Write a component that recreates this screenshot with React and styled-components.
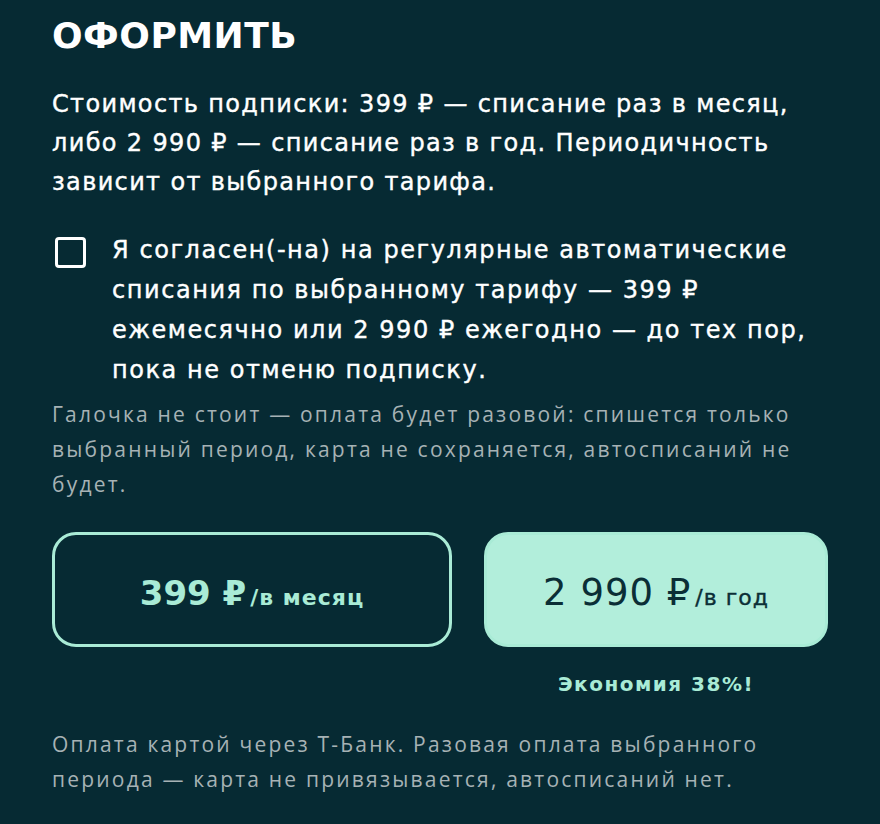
import React, { useState } from 'react';
import styled, { createGlobalStyle } from 'styled-components';

const GlobalStyle = createGlobalStyle`
  html, body {
    margin: 0;
    padding: 0;
    background: #062a33;
  }
  * {
    box-sizing: border-box;
  }
`;

const Panel = styled.section`
  width: 880px;
  min-height: 824px;
  padding: 14px 52px 0;
  background: #062a33;
  color: #ffffff;
  font-family: 'DejaVu Sans', 'Noto Sans', sans-serif;
`;

const Title = styled.h1`
  margin: 0;
  font-size: 36px;
  line-height: 44px;
  font-weight: 700;
  letter-spacing: 0.5px;
`;

const Lead = styled.p`
  margin: 27px 0 0;
  font-size: 24px;
  line-height: 39px;
  letter-spacing: 1.35px;
  -webkit-text-stroke: 0.4px currentColor;
`;

const Agree = styled.label`
  display: flex;
  gap: 26px;
  align-items: flex-start;
  margin-top: 28px;
  cursor: pointer;
`;

const Box = styled.span`
  flex: none;
  width: 31px;
  height: 31px;
  margin: 7px 0 0 3px;
  border: 3px solid #ffffff;
  border-radius: 4px;
  background: ${(p) => (p.$checked ? '#b2eedb' : 'transparent')};
`;

const AgreeText = styled.span`
  font-size: 24px;
  line-height: 40px;
  letter-spacing: 1.55px;
  -webkit-text-stroke: 0.4px currentColor;
`;

const Note = styled.p`
  margin: ${(p) => p.$top || '0'} 0 0;
  font-family: 'Open Sans', 'Roboto', sans-serif;
  font-size: 21px;
  line-height: 35px;
  letter-spacing: 2.2px;
  color: #a6b2b5;
`;

const Plans = styled.div`
  display: flex;
  gap: 32px;
  margin-top: 30px;
`;

const PlanColumn = styled.div`
  display: flex;
  flex-direction: column;
  align-items: center;
  flex: ${(p) => p.$grow};
`;

const Plan = styled.button`
  width: 100%;
  height: 115px;
  display: flex;
  align-items: center;
  justify-content: center;
  padding: 6px 0 0;
  border-radius: 24px;
  border: 3px solid #a9ebd6;
  background: ${(p) => (p.$filled ? '#b2eedb' : 'transparent')};
  color: ${(p) => (p.$filled ? '#0b2e36' : '#a9ebd6')};
  font-family: 'DejaVu Sans', sans-serif;
  cursor: pointer;
`;

const PlanLabel = styled.span`
  display: flex;
  align-items: baseline;
  gap: 4px;
`;

const Price = styled.span`
  font-size: ${(p) => (p.$bold ? '34px' : '37px')};
  font-weight: ${(p) => (p.$bold ? 700 : 400)};
  letter-spacing: ${(p) => (p.$bold ? '0' : '1px')};
`;

const Period = styled.span`
  font-size: 22px;
  letter-spacing: 1px;
  font-weight: ${(p) => (p.$bold ? 700 : 400)};
  -webkit-text-stroke: ${(p) => (p.$bold ? '0' : '0.4px currentColor')};
`;

const Saving = styled.div`
  margin-top: 25px;
  font-size: 20px;
  line-height: 24px;
  font-weight: 700;
  letter-spacing: 1.5px;
  color: #a9ebd6;
`;

export default function App() {
  const [checked, setChecked] = useState(false);

  return (
    <>
      <GlobalStyle />
      <Panel>
        <Title>ОФОРМИТЬ</Title>
        <Lead>
          Стоимость подписки: 399 ₽ — списание раз в месяц, либо 2 990 ₽ — списание раз в год.
          Периодичность зависит от выбранного тарифа.
        </Lead>
        <Agree onClick={() => setChecked(!checked)}>
          <Box $checked={checked} />
          <AgreeText>
            Я согласен(-на) на регулярные автоматические списания по выбранному тарифу — 399 ₽
            ежемесячно или 2 990 ₽ ежегодно — до тех пор, пока не отменю подписку.
          </AgreeText>
        </Agree>
        <Note $top="7px">
          Галочка не стоит — оплата будет разовой: спишется только выбранный период, карта не
          сохраняется, автосписаний не будет.
        </Note>
        <Plans>
          <PlanColumn $grow="400">
            <Plan>
              <PlanLabel>
                <Price $bold>399 ₽</Price>
                <Period $bold>/в месяц</Period>
              </PlanLabel>
            </Plan>
          </PlanColumn>
          <PlanColumn $grow="344">
            <Plan $filled>
              <PlanLabel>
                <Price>2 990 ₽</Price>
                <Period>/в год</Period>
              </PlanLabel>
            </Plan>
            <Saving>Экономия 38%!</Saving>
          </PlanColumn>
        </Plans>
        <Note $top="31px">
          Оплата картой через Т-Банк. Разовая оплата выбранного периода — карта не привязывается,
          автосписаний нет.
        </Note>
      </Panel>
    </>
  );
}
